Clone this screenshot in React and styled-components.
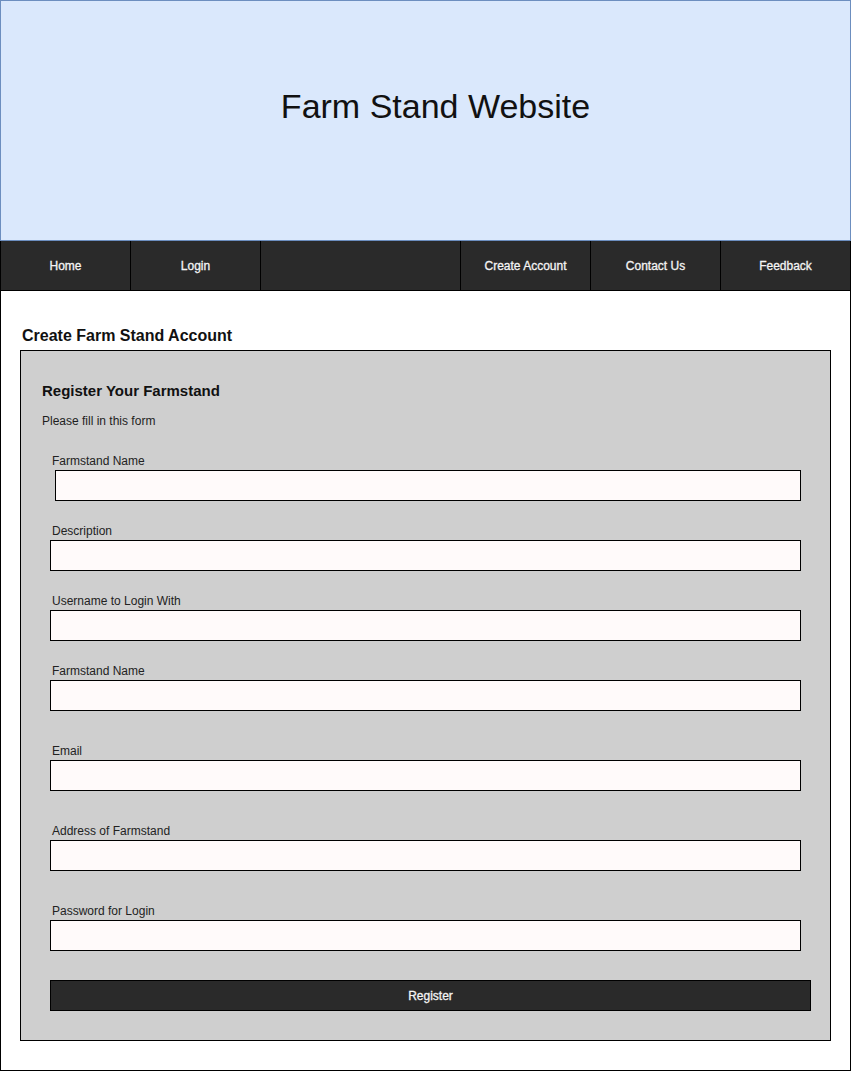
import React from "react";
import styled, { createGlobalStyle } from "styled-components";

const GlobalStyle = createGlobalStyle`
  body {
    margin: 0;
    background: #ffffff;
    font-family: "Liberation Sans", Arial, sans-serif;
  }
  * {
    box-sizing: border-box;
  }
`;

const navItems = [
  { label: "Home", width: 130 },
  { label: "Login", width: 130 },
  { label: "", width: 200 },
  { label: "Create Account", width: 130 },
  { label: "Contact Us", width: 130 },
  { label: "Feedback", width: 129, last: true },
];

const fields = [
  { label: "Farmstand Name", gap: 25, indent: 5 },
  { label: "Description", gap: 22 },
  { label: "Username to Login With", gap: 22 },
  { label: "Farmstand Name", gap: 22 },
  { label: "Email", gap: 32 },
  { label: "Address of Farmstand", gap: 32, type: "text" },
  { label: "Password for Login", gap: 32, type: "password" },
];

function App() {
  return (
    <Page>
      <GlobalStyle />
      <Header>
        <h1>Farm Stand Website</h1>
      </Header>

      <Nav>
        {navItems.map((item, i) => (
          <NavItem key={i} $width={item.width} $last={item.last}>
            {item.label}
          </NavItem>
        ))}
      </Nav>

      <Main>
        <PageTitle>Create Farm Stand Account</PageTitle>
        <Panel>
          <h3>Register Your Farmstand</h3>
          <p className="panel__hint">Please fill in this form</p>

          <Form onSubmit={(e) => e.preventDefault()}>
            {fields.map((field, i) => (
              <Field key={i} $gap={field.gap}>
                <label>{field.label}</label>
                <Input
                  type={field.type || "text"}
                  $indent={field.indent || 0}
                />
              </Field>
            ))}
            <RegisterButton type="submit">Register</RegisterButton>
          </Form>
        </Panel>
      </Main>
    </Page>
  );
}

export default App;

const Page = styled.div`
  width: 851px;
  display: flex;
  flex-direction: column;
`;

const Header = styled.div`
  height: 241px;
  background-color: #dae8fc;
  border: 1px solid #6c8ebf;
  display: flex;
  justify-content: center;
  align-items: flex-start;
  padding-top: 85px;
  padding-left: 20px;

  h1 {
    margin: 0;
    font-size: 34px;
    line-height: 40px;
    font-weight: 400;
    color: #111111;
  }
`;

const Nav = styled.div`
  height: 50px;
  display: flex;
  background-color: #2a2a2a;
  border: 1px solid #000000;
  border-top: none;
`;

const NavItem = styled.div`
  width: ${(p) => p.$width}px;
  flex: none;
  display: flex;
  align-items: center;
  justify-content: center;
  border-right: ${(p) => (p.$last ? "none" : "1px solid #000000")};
  color: #f4f4f4;
  font-size: 12px;
  -webkit-text-stroke: 0.3px #f4f4f4;
`;

const Main = styled.div`
  border: 1px solid #000000;
  border-top: none;
  padding: 35px 19px 29px 19px;
  background: #ffffff;
`;

const PageTitle = styled.h2`
  margin: 0 0 4px 0;
  padding-left: 2px;
  font-size: 16px;
  line-height: 20px;
  font-weight: 700;
  color: #111111;
`;

const Panel = styled.div`
  background-color: #cfcfcf;
  border: 1px solid #000000;
  padding: 31px 0 29px 20px;

  h3 {
    margin: 0;
    padding-left: 1px;
    font-size: 15px;
    line-height: 18px;
    font-weight: 700;
    color: #111111;
  }

  .panel__hint {
    margin: 14px 0 0 0;
    padding-left: 1px;
    font-size: 12px;
    line-height: 14px;
    color: #1e1e1e;
  }
`;

const Form = styled.form`
  padding-left: 9px;
  display: flex;
  flex-direction: column;
`;

const Field = styled.div`
  margin-top: ${(p) => p.$gap}px;
  display: flex;
  flex-direction: column;

  label {
    padding: 1px 0 0 2px;
    font-size: 12px;
    line-height: 14px;
    color: #222222;
  }
`;

const Input = styled.input`
  margin: 2px 0 0 ${(p) => p.$indent}px;
  width: ${(p) => 751 - p.$indent}px;
  height: 31px;
  background-color: #fffafa;
  border: 1px solid #000000;
  border-radius: 0;
  outline: none;
  padding: 0 6px;
  font-family: inherit;
  font-size: 12px;
`;

const RegisterButton = styled.button`
  margin-top: 29px;
  width: 761px;
  height: 31px;
  background-color: #2a2a2a;
  border: 1px solid #000000;
  border-radius: 0;
  color: #f4f4f4;
  font-family: inherit;
  font-size: 12px;
  -webkit-text-stroke: 0.3px #f4f4f4;
  cursor: pointer;
`;
